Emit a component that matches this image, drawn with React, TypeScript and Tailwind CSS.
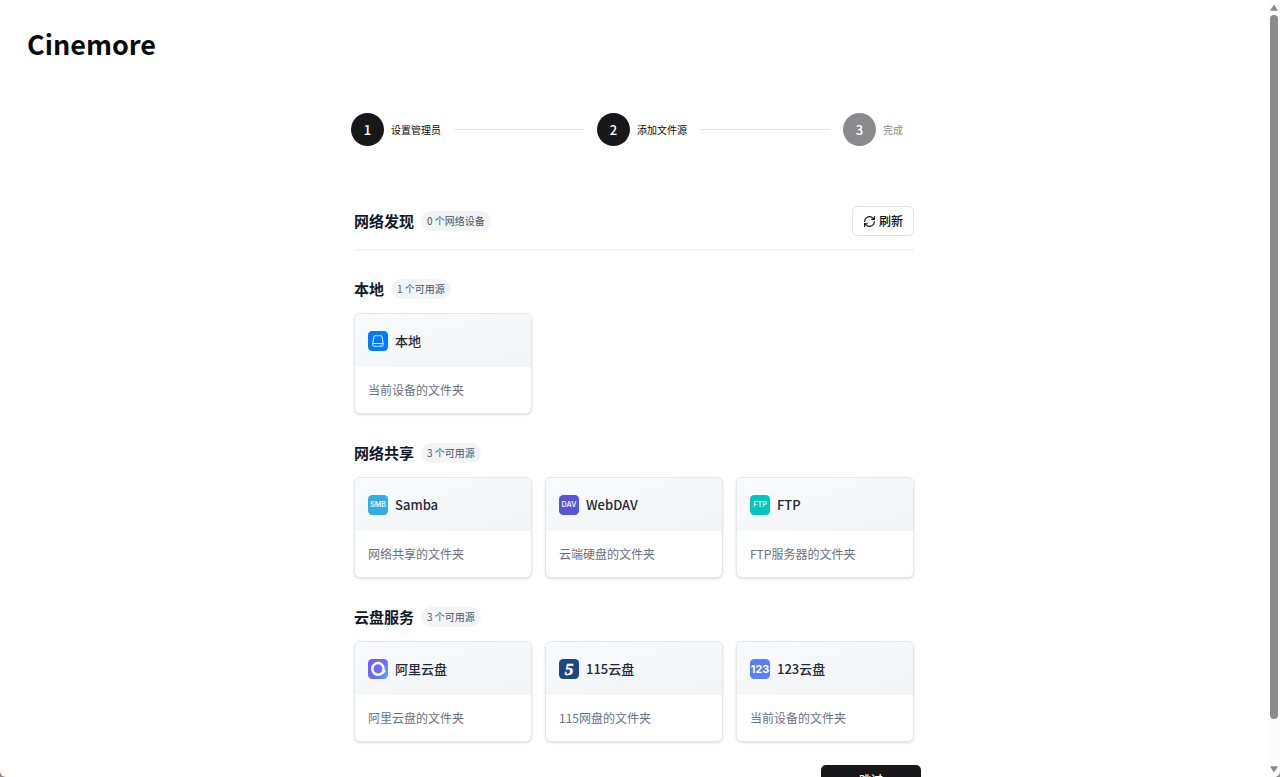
import React, { Fragment } from 'react';
import { clsx } from 'clsx';
import { RefreshCw } from 'lucide-react';

type Source = {
    id: string;
    name: string;
    description: string;
    icon: React.ReactNode;
};

type SourceGroup = {
    title: string;
    sources: Source[];
};

const LocalIcon = () => (
    <svg viewBox="0 0 24 24" className="size-5 shrink-0" aria-hidden="true">
        <rect width="24" height="24" rx="5" fill="#007aff" />
        <g fill="none" stroke="#cfe5ff" strokeWidth="1.3" strokeLinejoin="round" strokeLinecap="round">
            <path d="M8.5 5.6h7c.7 0 1.2.4 1.3 1l1.4 8.2v2c0 .9-.6 1.5-1.5 1.5H7.3c-.9 0-1.5-.6-1.5-1.5v-2l1.4-8.2c.1-.6.6-1 1.3-1z" />
            <path d="M5.9 15h12.2M15.4 16.7h.8" />
        </g>
    </svg>
);

const LabelIcon = ({ label, color }: { label: string; color: string }) => (
    <svg viewBox="0 0 24 24" className="size-5 shrink-0" aria-hidden="true">
        <rect width="24" height="24" rx="5" fill={color} />
        <text x="12" y="14.6" textAnchor="middle" fill="#ffffff" fillOpacity="0.92" fontFamily="Inter, sans-serif" fontSize="8.6" fontWeight="600">
            {label}
        </text>
    </svg>
);

const AliIcon = () => (
    <svg viewBox="0 0 24 24" className="size-5 shrink-0" aria-hidden="true">
        <defs>
            <linearGradient id="ali" x1="0" y1="0.2" x2="1" y2="0.8">
                <stop offset="0" stopColor="#6a5cff" />
                <stop offset="0.6" stopColor="#6d6bff" />
                <stop offset="1" stopColor="#55a8ff" />
            </linearGradient>
        </defs>
        <rect width="24" height="24" rx="5" fill="url(#ali)" />
        <path d="M18.6 13.2A6.8 7 0 1 0 12 18.8c2.4 0 4.4-.9 5.8-2.6" fill="none" stroke="#ffffff" strokeWidth="3" strokeLinecap="round" />
        <path d="M15.4 13.3c1.3.8 2.6.9 4 .4l1.8-.8c-.1 2.3-1.2 4.1-3 5.2l-1.8-1.9c.5-.5.8-1 .9-1.5-.8-.2-1.4-.6-1.9-1.4z" fill="#ffffff" />
    </svg>
);

const Pan115Icon = () => (
    <svg viewBox="0 0 24 24" className="size-5 shrink-0" aria-hidden="true">
        <rect width="24" height="24" rx="5" fill="#204684" />
        <text x="12" y="19" textAnchor="middle" fill="#ffffff" stroke="#ffffff" strokeWidth="0.5" fontFamily="'Liberation Serif', serif" fontSize="21" fontStyle="italic" fontWeight="700">
            5
        </text>
    </svg>
);

const Pan123Icon = () => (
    <svg viewBox="0 0 24 24" className="size-5 shrink-0" aria-hidden="true">
        <rect width="24" height="24" rx="5" fill="#597dfc" />
        <text x="12" y="16.8" textAnchor="middle" fill="#ffffff" fontFamily="Inter, sans-serif" fontSize="13" fontWeight="700">
            123
        </text>
    </svg>
);

const steps = ['设置管理员', '添加文件源', '完成'];
const currentStep = 2;

const groups: SourceGroup[] = [
    {
        title: '本地',
        sources: [
            { id: 'local', name: '本地', description: '当前设备的文件夹', icon: <LocalIcon /> },
        ],
    },
    {
        title: '网络共享',
        sources: [
            { id: 'smb', name: 'Samba', description: '网络共享的文件夹', icon: <LabelIcon label="SMB" color="#32ade6" /> },
            { id: 'dav', name: 'WebDAV', description: '云端硬盘的文件夹', icon: <LabelIcon label="DAV" color="#5856d6" /> },
            { id: 'ftp', name: 'FTP', description: 'FTP服务器的文件夹', icon: <LabelIcon label="FTP" color="#00c7be" /> },
        ],
    },
    {
        title: '云盘服务',
        sources: [
            { id: 'ali', name: '阿里云盘', description: '阿里云盘的文件夹', icon: <AliIcon /> },
            { id: '115', name: '115云盘', description: '115网盘的文件夹', icon: <Pan115Icon /> },
            { id: '123', name: '123云盘', description: '当前设备的文件夹', icon: <Pan123Icon /> },
        ],
    },
];

const Stepper = () => (
    <ol className="flex items-center gap-[13px] pl-1 pr-[18px]">
        {steps.map((label, i) => {
            const reached = i + 1 <= currentStep;
            return (
                <Fragment key={label}>
                    {i > 0 && <li aria-hidden="true" className="h-px flex-1 bg-[#e4e4e7]" />}
                    <li className={clsx('flex items-center gap-[7px]', !reached && 'opacity-50')}>
                        <span className="flex size-[33px] items-center justify-center rounded-full bg-[#18181b] text-[13px] font-medium text-white">
                            {i + 1}
                        </span>
                        <span className="text-[10px] text-[#09090b]">{label}</span>
                    </li>
                </Fragment>
            );
        })}
    </ol>
);

const SectionTitle = ({ title, badge }: { title: string; badge: string }) => (
    <div className="flex items-center gap-[7px]">
        <h2 className="text-[15px] leading-6 font-bold text-[#111827]">{title}</h2>
        <span className="rounded-full bg-gray-100 px-1.5 text-[10px] leading-5 text-gray-600">{badge}</span>
    </div>
);

const SourceCard = ({ source }: { source: Source }) => (
    <button className="overflow-hidden rounded-md border border-gray-200 bg-white text-left shadow-sm">
        <span className="flex items-center gap-[7px] bg-linear-to-br from-gray-50 to-gray-100 px-[13px] py-4">
            {source.icon}
            <span className="text-[13px] leading-[21px] font-medium text-[#1f2937]">{source.name}</span>
        </span>
        <span className="block px-[13px] py-[13px] text-xs leading-5 text-gray-500">{source.description}</span>
    </button>
);

// Decorative scroll rail on the right edge of the window
const ScrollRail = () => (
    <div aria-hidden="true" className="flex w-3 shrink-0 flex-col items-center gap-1 bg-[#fcfcfc] py-1 text-[#8b8b8b]">
        <svg viewBox="0 0 8 7" className="h-[7px] w-2" fill="currentColor">
            <path d="M4 .5 7.6 6a.5.5 0 0 1-.4.8H.8A.5.5 0 0 1 .4 6z" />
        </svg>
        <div className="flex w-2 flex-1 flex-col">
            <div className="flex-[705] rounded-full bg-current" />
            <div className="flex-[43]" />
        </div>
        <svg viewBox="0 0 8 7" className="h-[7px] w-2" fill="currentColor">
            <path d="M4 6.5.4 1A.5.5 0 0 1 .8.2h6.4a.5.5 0 0 1 .4.8z" />
        </svg>
    </div>
);

export default function App() {
    return (
        <div className="h-screen bg-[#968b80] font-['Noto_Sans_CJK_SC',sans-serif] text-[#09090b]">
            <div className="flex h-full overflow-hidden rounded-b-md bg-white">
                <div className="min-w-0 flex-1 overflow-y-auto [scrollbar-width:none]">
                    <header className="px-[27px] pt-6">
                        <h1 className="text-[27px] leading-10 font-bold">Cinemore</h1>
                    </header>

                    <main className="mx-auto mt-[49px] max-w-[574px] pb-8">
                        <Stepper />

                        <div className="mt-[60px] px-[7px]">
                            <div className="flex items-center justify-between border-b-2 border-gray-100 pb-[13px]">
                                <SectionTitle title="网络发现" badge="0 个网络设备" />
                                <button className="flex h-[30px] items-center gap-[3px] rounded-[5px] border border-[#e4e4e7] px-2.5 text-xs font-medium">
                                    <RefreshCw className="size-[13px]" aria-hidden="true" />
                                    刷新
                                </button>
                            </div>

                            <div className="mt-[26px] flex flex-col gap-[27px]">
                                {groups.map((group) => (
                                    <section key={group.title}>
                                        <SectionTitle title={group.title} badge={`${group.sources.length} 个可用源`} />
                                        <div className="mt-3 grid grid-cols-3 gap-[13px]">
                                            {group.sources.map((source) => (
                                                <SourceCard key={source.id} source={source} />
                                            ))}
                                        </div>
                                    </section>
                                ))}
                            </div>
                        </div>

                        <div className="mt-[23px] flex justify-end">
                            <button className="h-[30px] w-[100px] rounded-[5px] bg-[#18181b] text-xs font-medium text-white">跳过</button>
                        </div>
                    </main>
                </div>
                <ScrollRail />
            </div>
        </div>
    );
}
